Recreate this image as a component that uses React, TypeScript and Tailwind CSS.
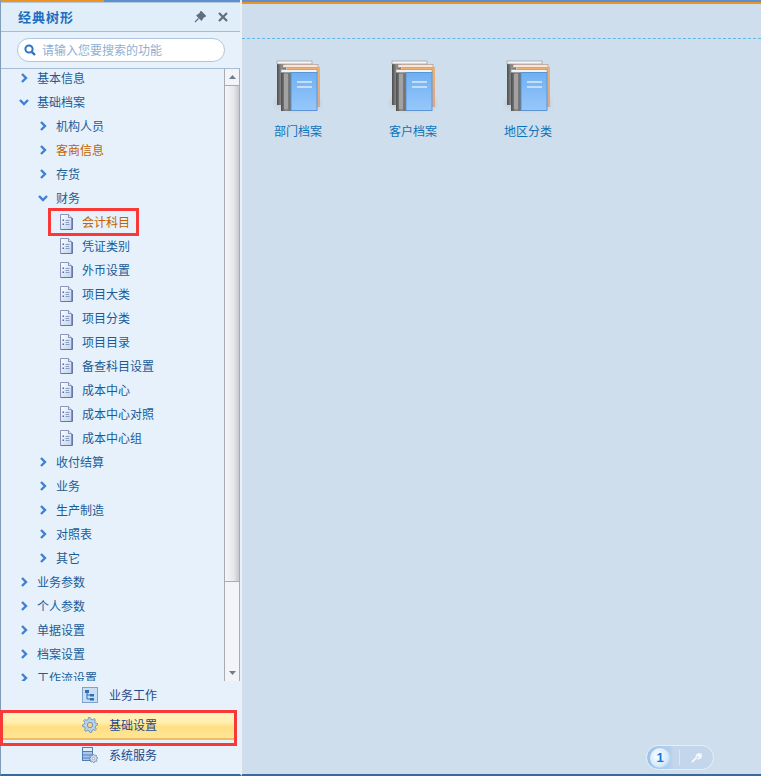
import React from "react";

type Row = { t: string; l: 0 | 1 | 2; open?: boolean; hot?: boolean };

const rows: Row[] = [
  { t: "基本信息", l: 0 },
  { t: "基础档案", l: 0, open: true },
  { t: "机构人员", l: 1 },
  { t: "客商信息", l: 1, hot: true },
  { t: "存货", l: 1 },
  { t: "财务", l: 1, open: true },
  { t: "会计科目", l: 2, hot: true },
  { t: "凭证类别", l: 2 },
  { t: "外币设置", l: 2 },
  { t: "项目大类", l: 2 },
  { t: "项目分类", l: 2 },
  { t: "项目目录", l: 2 },
  { t: "备查科目设置", l: 2 },
  { t: "成本中心", l: 2 },
  { t: "成本中心对照", l: 2 },
  { t: "成本中心组", l: 2 },
  { t: "收付结算", l: 1 },
  { t: "业务", l: 1 },
  { t: "生产制造", l: 1 },
  { t: "对照表", l: 1 },
  { t: "其它", l: 1 },
  { t: "业务参数", l: 0 },
  { t: "个人参数", l: 0 },
  { t: "单据设置", l: 0 },
  { t: "档案设置", l: 0 },
  { t: "工作流设置", l: 0 },
];

function Chevron({ open }: { open?: boolean }) {
  return (
    <svg width="10" height="12" viewBox="0 0 10 12" className="shrink-0">
      {open ? (
        <path d="M1 4 L5 8 L9 4" fill="none" stroke="#3f80d2" strokeWidth="2.4" />
      ) : (
        <path d="M3 2 L7 6 L3 10" fill="none" stroke="#3f80d2" strokeWidth="2.4" />
      )}
    </svg>
  );
}

function DocIcon() {
  return (
    <svg width="14" height="16" viewBox="0 0 14 16" className="shrink-0">
      <defs>
        <linearGradient id="docg" x1="0" y1="0" x2="1" y2="1">
          <stop offset="0" stopColor="#ffffff" />
          <stop offset="1" stopColor="#bcd2f0" />
        </linearGradient>
      </defs>
      <path d="M1.5 .5 H9.5 L12.5 3.5 V15.5 H1.5 Z" fill="url(#docg)" stroke="#8a93bc" />
      <path d="M9.5 .5 V3.5 H12.5" fill="#e6ebf7" stroke="#8a93bc" />
      <path d="M13.5 4 V15.5 H2" fill="none" stroke="#6a74a4" strokeWidth="1" />
      <rect x="3.5" y="5.5" width="1.5" height="1.5" fill="#56688c" />
      <rect x="3.5" y="9.5" width="1.5" height="1.5" fill="#56688c" />
      <path d="M6.5 6.5 H10.5 M6.5 8.5 H10 M6.5 10.5 H10.5" stroke="#8ba0c2" strokeWidth="1" />
    </svg>
  );
}

function BookIcon() {
  return (
    <svg width="50" height="60" viewBox="0 0 50 60" className="block">
      <defs>
        <linearGradient id="spine" x1="0" y1="0" x2="1" y2="0">
          <stop offset="0" stopColor="#4c4c4c" />
          <stop offset=".5" stopColor="#8f8f8f" />
          <stop offset="1" stopColor="#6a6660" />
        </linearGradient>
        <linearGradient id="cover" x1="0" y1="0" x2="0" y2="1">
          <stop offset="0" stopColor="#6fb0f2" />
          <stop offset="1" stopColor="#97c7fa" />
        </linearGradient>
        <linearGradient id="orangeb" x1="0" y1="0" x2="0" y2="1">
          <stop offset="0" stopColor="#eeb070" />
          <stop offset="1" stopColor="#d9a88a" />
        </linearGradient>
        <filter id="blur1"><feGaussianBlur stdDeviation="2" /></filter>
        <filter id="soft"><feGaussianBlur stdDeviation=".3" /></filter>
      </defs>
      <ellipse cx="25" cy="46" rx="24" ry="8" fill="#b9b9b9" opacity=".4" filter="url(#blur1)" />
      <g filter="url(#soft)">
        <rect x="4" y="5" width="9" height="43" fill="url(#spine)" />
        <rect x="4" y="4" width="35" height="3" fill="#f4f4f4" stroke="#8c8c8c" strokeWidth=".6" />
        <rect x="14" y="10" width="33" height="40" fill="url(#orangeb)" />
        <rect x="10" y="7.5" width="35" height="3" fill="#f6e6da" stroke="#b09080" strokeWidth=".6" />
        <rect x="8" y="14" width="10" height="40" fill="url(#spine)" />
        <rect x="11" y="17" width="4" height="35" fill="#a2a2a2" />
        <rect x="8" y="12.5" width="36" height="3" fill="#f2f2f2" stroke="#8c8c8c" strokeWidth=".6" />
        <rect x="18" y="15.5" width="26" height="38" fill="url(#cover)" stroke="#5c94d8" />
        <path d="M24 25 H39" stroke="#c4def8" strokeWidth="2" />
        <path d="M24 30 H39" stroke="#c4def8" strokeWidth="2" />
      </g>
    </svg>
  );
}

function FlowIcon() {
  return (
    <svg width="16" height="16" viewBox="0 0 16 16">
      <rect x=".5" y=".5" width="15" height="15" fill="#c9def5" stroke="#7ea2cc" />
      <rect x="3" y="3" width="4" height="3" fill="#2a6fb8" />
      <rect x="8" y="7" width="4" height="2.5" fill="#2a6fb8" />
      <rect x="8" y="11" width="4" height="2.5" fill="#2a6fb8" />
      <path d="M5 6 V12 H8 M5 8 H8" fill="none" stroke="#2a6fb8" />
    </svg>
  );
}

function GearPath({ cx, cy, r, fill, stroke }: { cx: number; cy: number; r: number; fill: string; stroke: string }) {
  const pts: string[] = [];
  const teeth = 8;
  for (let i = 0; i < teeth * 4; i++) {
    const a = (i / (teeth * 4)) * Math.PI * 2 - Math.PI / 16;
    const rad = i % 4 < 2 ? r : r * 0.74;
    pts.push(`${(cx + rad * Math.cos(a)).toFixed(2)},${(cy + rad * Math.sin(a)).toFixed(2)}`);
  }
  return <polygon points={pts.join(" ")} fill={fill} stroke={stroke} strokeWidth="0.8" />;
}

function GearIcon() {
  return (
    <svg width="16" height="16" viewBox="0 0 16 16">
      <GearPath cx={8} cy={8} r={7.6} fill="#b8d2ee" stroke="#5f86b4" />
      <circle cx="8" cy="8" r="2.7" fill="#f6d67a" stroke="#5f86b4" strokeWidth=".8" />
    </svg>
  );
}

function ServerIcon() {
  return (
    <svg width="16" height="16" viewBox="0 0 16 16">
      <rect x=".5" y=".5" width="10" height="13" fill="#a9c8ee" stroke="#4f7fb8" />
      <path d="M1 4.5 H10 M1 8 H10 M1 11 H10" stroke="#4f7fb8" />
      <rect x="1" y="1" width="9" height="3" fill="#e4eefa" />
      <GearPath cx={11.5} cy={11.5} r={4.2} fill="#dce8f5" stroke="#5f7fa8" />
      <circle cx="11.5" cy="11.5" r="1.3" fill="#ffffff" stroke="#5f7fa8" strokeWidth=".6" />
    </svg>
  );
}

function NavRow({ icon, label, active }: { icon: React.ReactNode; label: string; active?: boolean }) {
  return (
    <div
      className={
        active
          ? "flex items-center h-[30px] mr-[4px] pl-[80px] pt-[2px] gap-[11px] bg-[linear-gradient(#fff6c8,#ffeeac_45%,#ffdf84_60%,#ffe595)] border-b-2 border-[#f0bc62]"
          : "flex items-center h-[30px] pl-[80px] gap-[11px]"
      }
    >
      <span className="w-[17px] h-4 flex items-center justify-center">{icon}</span>
      <span className="text-[12px] leading-none text-[#1d4a8c]">{label}</span>
    </div>
  );
}

function TreeRow({ r }: { r: Row }) {
  const color = r.hot ? "text-[#c46200]" : "text-[#1a5c98]";
  if (r.l === 2) {
    return (
      <div className="flex items-center h-6 pl-[58px] gap-[9px]">
        <DocIcon />
        <span className={`text-[12px] leading-none ${color}`}>{r.t}</span>
      </div>
    );
  }
  return (
    <div className={r.l === 0 ? "flex items-center h-6 pl-[18px] gap-[8px]" : "flex items-center h-6 pl-[37px] gap-[8px]"}>
      <Chevron open={r.open} />
      <span className={`text-[12px] leading-none ${color}`}>{r.t}</span>
    </div>
  );
}

function Scrollbar() {
  return (
    <div className="w-[16px] shrink-0 flex flex-col bg-[#f2f4f7] border-x border-[#a8acb2]">
      <div className="h-[16px] flex items-center justify-center shrink-0">
        <svg width="7" height="4" viewBox="0 0 7 4"><path d="M3.5 0 L7 4 H0 Z" fill="#6f7f90" /></svg>
      </div>
      <div className="h-[497px] shrink-0 border-y border-[#a8acb2] bg-[linear-gradient(90deg,#f6f6f8,#e8e8ec_60%,#c6c6d0)]" />
      <div className="flex-1" />
      <div className="h-[16px] flex items-center justify-center shrink-0">
        <svg width="7" height="4" viewBox="0 0 7 4"><path d="M0 0 H7 L3.5 4 Z" fill="#6f7f90" /></svg>
      </div>
    </div>
  );
}

function Archive({ label }: { label: string }) {
  return (
    <div className="w-[115px] flex flex-col">
      <div className="-ml-px">
        <BookIcon />
      </div>
      <div className="mt-[6px] text-[12px] leading-4 text-[#0d72b8]">{label}</div>
    </div>
  );
}

export default function App() {
  return (
    <div
      className="w-[761px] h-[776px] flex overflow-hidden bg-[#cfdeec]"
      style={{ fontFamily: '"Noto Sans CJK SC", "Liberation Sans", sans-serif' }}
    >
      <aside className="relative w-[242px] h-full shrink-0 flex flex-col bg-[#e6f1fb] border-l border-[#7f9cb8] border-r-2 border-r-[#eaf0f6] border-b-2 border-b-[#3a6a9c]">
        <div className="h-[2px] shrink-0 bg-[linear-gradient(90deg,#ee9322_0,#ee9322_43%,#5b8fd0_43%,#5b8fd0_100%)]" />
        <div className="h-[30px] shrink-0 flex items-center pl-[17px] pr-[12px] bg-[#dfeef9] border-t border-[#b6c9dc] border-b border-b-[#a5bcd4]">
          <span className="text-[13px] font-bold text-[#1d6fc0] tracking-[1px]">经典树形</span>
          <span className="flex-1" />
          <svg width="12" height="12" viewBox="0 0 12 12" className="mr-[12px]">
            <path d="M7 0.5 L11.5 5 L9.5 6 L7.5 9 L3 4.5 L6 2.5 Z M4.5 7.5 L1 11" fill="#5f6f80" stroke="#5f6f80" strokeWidth="1.2" />
          </svg>
          <svg width="10" height="10" viewBox="0 0 10 10">
            <path d="M1 1 L9 9 M9 1 L1 9" stroke="#5f6f80" strokeWidth="2.2" />
          </svg>
        </div>
        <div className="h-[37px] shrink-0 flex items-center pl-4 pr-[15px] border-b border-[#a5bcd4]">
          <div className="w-[208px] h-[24px] flex items-center gap-[6px] pl-[6px] rounded-full bg-white border border-[#afc6de]">
            <svg width="12" height="12" viewBox="0 0 12 12" className="shrink-0">
              <circle cx="5" cy="5" r="3.6" fill="none" stroke="#2f73c4" strokeWidth="2" />
              <path d="M7.8 7.8 L11 11" stroke="#2f73c4" strokeWidth="2.4" />
            </svg>
            <span className="text-[12px] leading-none text-[#8fafd2]">请输入您要搜索的功能</span>
          </div>
        </div>
        <div className="h-[612px] shrink-0 flex overflow-hidden">
          <div className="flex-1 overflow-hidden">
            <div className="-mt-[3px]">
              {rows.map((r) => (
                <TreeRow key={r.t} r={r} />
              ))}
            </div>
          </div>
          <Scrollbar />
        </div>
        <div className="-mt-px" />
        <NavRow icon={<FlowIcon />} label="业务工作" />
        <NavRow icon={<GearIcon />} label="基础设置" active />
        <NavRow icon={<ServerIcon />} label="系统服务" />
        <div className="absolute left-[47px] top-[208px] w-[91px] h-[28px] border-[3px] border-[#f93838]" />
        <div className="absolute -left-px top-[710px] w-[237px] h-[36px] border-[3px] border-[#f93838]" />
      </aside>
      <main className="relative flex-1 h-full flex flex-col border-b-2 border-[#3a6a9c]">
        <div className="h-[2px] shrink-0 bg-[#5b8fd0]" />
        <div className="h-[2px] shrink-0 bg-[#ee9322]" />
        <div className="h-[35px] shrink-0 border-b border-dashed border-[#62b7ea]" />
        <div className="flex pt-[18px] pl-[32px]">
          <Archive label="部门档案" />
          <Archive label="客户档案" />
          <Archive label="地区分类" />
        </div>
        <div className="absolute left-[404px] top-[745px] w-[68px] h-[25px] rounded-full border border-[#e6eff8] bg-[linear-gradient(90deg,#9cc2ec,#b4cfee_35%,#c3d6ec_40%)] flex items-center">
          <div className="ml-[3px] w-[20px] h-[20px] rounded-full bg-[radial-gradient(circle_at_40%_40%,#ffffff,#d4e9fb_60%,#7db8ee)] flex items-center justify-center text-[13px] font-bold leading-none text-[#1478d4]" style={{ fontFamily: '"Liberation Sans", sans-serif' }}>
            1
          </div>
          <div className="ml-[9px] w-px h-[15px] bg-[#dde8f3]" />
          <svg width="12" height="12" viewBox="0 0 12 12" className="ml-[10px]">
            <path d="M2 10 L6.5 5.5 M6.5 5.5 C6 3 8 1.5 10 2 L8.5 3.8 L9.5 4.8 L11 3.5 C11.2 6 9 7 7.5 6.5" fill="none" stroke="#f4f8fc" strokeWidth="1.8" />
          </svg>
        </div>
      </main>
    </div>
  );
}
